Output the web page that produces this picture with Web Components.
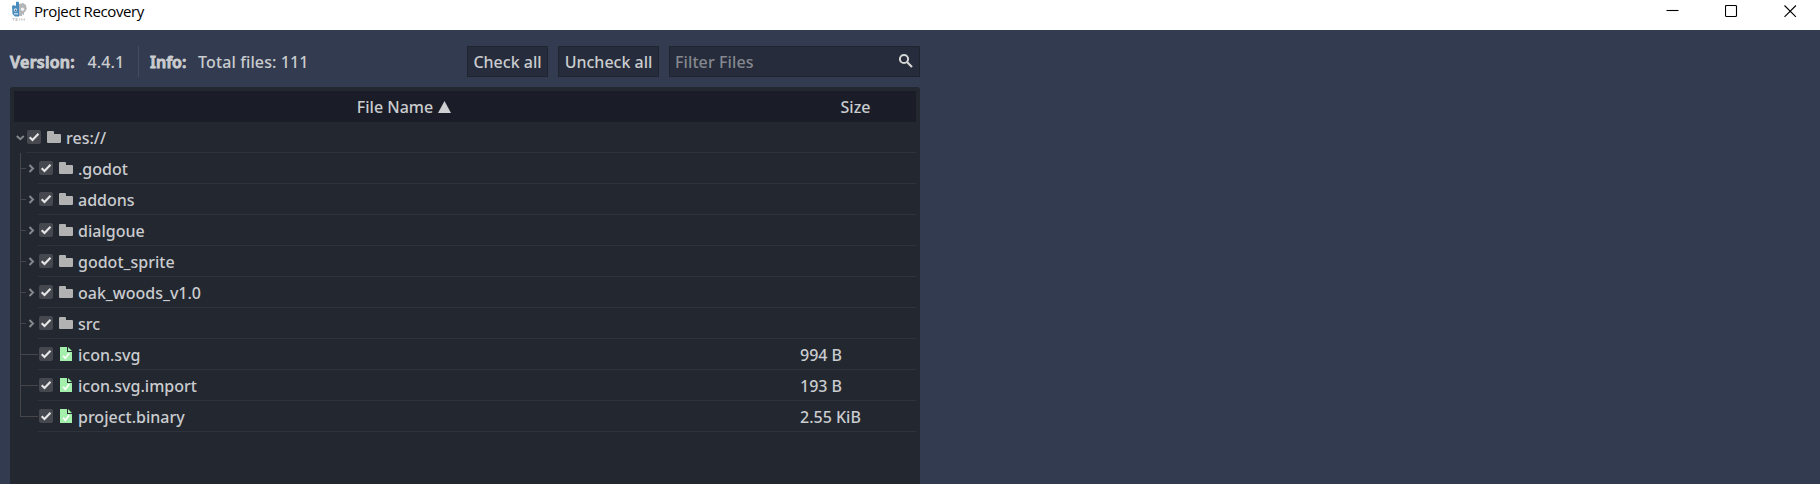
<!DOCTYPE html>
<html lang="en">
<head>
<meta charset="utf-8">
<title>Project Recovery</title>
<style>
html,body{margin:0;height:100%;overflow:hidden;background:#333b50}
body{font-family:"Noto Sans","Open Sans",sans-serif;font-size:16px;font-weight:500;color:#cacccf}
</style>
</head>
<body>
<recovery-window></recovery-window>
<script>
const define = (name, html) => customElements.define(name, class extends HTMLElement {
  constructor() {
    super();
    this.attachShadow({ mode: "open" });
  }
  connectedCallback() {
    this.shadowRoot.innerHTML = typeof html === "function" ? html(this) : html;
  }
});

define("title-bar", `
<style>
:host{display:flex;height:30px;background:#fff;color:#000;box-sizing:border-box;padding-left:11px}
.logo{width:16px;height:20px;margin-top:1px}
.name{font:400 15px/22px "Open Sans","Noto Sans",sans-serif;margin-left:7px;flex:1;white-space:nowrap;letter-spacing:-.4px}
.controls{display:flex;gap:46px;padding:5px 23px 0 0}
.controls svg{width:13px;height:13px;fill:none;stroke:#000;stroke-width:1.1}
</style>
<svg class="logo" viewBox="0 0 16 20">
  <path d="M1 5l2-1 1 1 1-.5V1l2-.5 1 1v14H4L1.500 13z" fill="#478cbf"/>
  <path d="M8 3l4-1 3 2 .8 4-1.800 3-1 .5V14h-1v-1h-1v2H8z" fill="#b4b6ba"/>
  <circle cx="4.500" cy="9" r="1.700" fill="#d8e7f1"/><circle cx="4.700" cy="9.200" r=".8" fill="#414f5b"/>
  <circle cx="11.500" cy="8.200" r="1.700" fill="#f1f1f1"/>
  <path d="M3 12h4v1.500H3z" fill="#b9d5e8"/>
  <path d="M1.500 17.500h2m-1 0v2m2-2h2m-2 1h2m-2 1h2m2-2v2m2-2v2m1.500-2v2m1.500-2v2" stroke="#c9c9c9" fill="none"/>
</svg>
<span class="name">Project Recovery</span>
<div class="controls">
  <svg viewBox="0 0 13 13"><path d="M.5 5.500h12"/></svg>
  <svg viewBox="0 0 13 13"><rect x=".5" y=".5" width="11" height="11" rx="1"/></svg>
  <svg viewBox="0 0 13 13"><path d="M.5.500l11.400 11.400M11.900.500L.5 11.900"/></svg>
</div>`);

define("tool-button", `
<style>
:host{display:block;box-sizing:border-box;height:31px;border:1px solid #1f252f;background:#262c3b;text-align:center;line-height:31px;white-space:nowrap}
</style><slot></slot>`);

define("filter-field", `
<style>
:host{display:flex;box-sizing:border-box;height:31px;width:251px;border:1px solid #1f252f;background:#262c3b;color:#85888f;line-height:31px;padding:0 5px 0 5px;justify-content:space-between;letter-spacing:.1px}
svg{width:16px;height:16px;margin-top:6px;fill:none;stroke:#d5d6d6}
</style><slot></slot>
<svg viewBox="0 0 16 16"><circle cx="6" cy="6" r="4.100" stroke-width="2"/><path d="M9 9l5 5" stroke-width="2.200"/></svg>`);

define("tool-bar", `
<style>
:host{display:flex;height:31px;width:910px;line-height:32px;white-space:nowrap}
b{font-weight:600;-webkit-text-stroke:.9px currentColor}
.ver{width:77.500px;letter-spacing:.25px}.num{width:50.500px;letter-spacing:.15px}.info{width:48px;margin-left:11px}
.sep{width:1px;background:#464c5e}
.total{flex:1;letter-spacing:.12px}
.check{width:81px;margin-right:10px}.uncheck{width:101px;margin-right:10px}
</style>
<b class="ver">Version:</b><span class="num">4.4.1</span><span class="sep"></span>
<b class="info">Info:</b><span class="total">Total files: 111</span>
<tool-button class="check">Check all</tool-button>
<tool-button class="uncheck">Uncheck all</tool-button>
<filter-field>Filter Files</filter-field>`);

define("tree-header", `
<style>
:host{display:grid;grid-template-columns:780px 122px;height:31px;background:#1a1d27;line-height:32px;text-align:center}
.file{display:flex;justify-content:center;align-items:center;gap:5px}
.size{padding-left:1px}
svg{width:13px;height:12px;margin-top:0}
</style>
<span class="file"><span>File Name</span><svg viewBox="0 0 13 12"><path d="M6.500 0L13 12H0z" fill="#cdcfd2"/></svg></span><span class="size">Size</span>`);

const checkbox = `<svg class="box" viewBox="0 0 14 14"><rect width="14" height="14" rx="2" fill="#45484f"/><path d="M2.700 7.200l2.800 2.700 6-6.200" fill="none" stroke="#e6e6e6" stroke-width="2.100"/></svg>`;
const folder = `<svg class="icon" viewBox="0 0 14 14"><path d="M0 2q0-1 1-1h5q1 0 1 1v2h6q1 0 1 1v7q0 1-1 1H1q-1 0-1-1z" fill="#b2b2b2"/></svg>`;
const file = `<svg class="icon" viewBox="0 0 14 14"><path d="M1 0h7v5h5v9H1zM9 0l4 4H9z" fill="#a5efac"/><path d="M4.100 8.700l2.200 2.500 3.900-5" fill="none" stroke="#fff" stroke-width="1.700"/></svg>`;

define("tree-row", el => {
  const kind = el.getAttribute("kind");
  const root = kind === "root";
  const last = el.hasAttribute("last");
  const guide = root
    ? `<path d="M2.800 14l3.500 3.200L9.800 14" class="arrow"/>`
    : `<path d="M6.500 0V${last ? 16 : 31}M7 15.500h${kind === "file" ? 17 : 5}" class="line"/>` +
      (kind === "folder" ? `<path d="M15.500 12l3.500 3.500-3.500 3.500" class="arrow"/>` : "");
  const w = root ? 12 : 24;
  return `
<style>
:host{display:flex;height:31px}
.guide{width:${w}px;height:31px;flex:none}
.line{stroke:#46464a;fill:none}
.arrow{stroke:#85888c;stroke-width:2;fill:none}
.body{flex:1;display:flex;box-sizing:border-box;border-bottom:1px solid #2f333b;padding-left:1px}
.box,.icon{width:14px;height:14px;margin-top:8px;flex:none}
.icon{margin:8px 5px 0 6px}
.name{line-height:33px;height:30px;width:${root ? 734 : 722}px;white-space:pre}
.size{line-height:33px;height:30px;white-space:pre}
</style>
<svg class="guide" viewBox="0 0 ${w} 31">${guide}</svg>
<div class="body">${checkbox}${kind === "file" ? file : folder}<span class="name"><slot></slot></span><span class="size">${el.getAttribute("size") || ""}</span></div>`;
});

define("file-tree", `
<style>
:host{display:block;box-sizing:border-box;width:910px;flex:1;background:#23272f;border-radius:3px 3px 0 0;padding:4px}
</style>
<tree-header></tree-header>
<tree-row kind="root">res://</tree-row>
<tree-row kind="folder">.godot</tree-row>
<tree-row kind="folder">addons</tree-row>
<tree-row kind="folder">dialgoue</tree-row>
<tree-row kind="folder">godot_sprite</tree-row>
<tree-row kind="folder">oak_woods_v1.0</tree-row>
<tree-row kind="folder">src</tree-row>
<tree-row kind="file" size="994 B">icon.svg</tree-row>
<tree-row kind="file" size="193 B">icon.svg.import</tree-row>
<tree-row kind="file" size="2.55 KiB" last>project.binary</tree-row>`);

define("recovery-window", `
<style>
:host{display:flex;flex-direction:column;height:484px}
main{flex:1;display:flex;flex-direction:column;gap:10px;padding:16px 10px 0}
</style>
<title-bar></title-bar>
<main><tool-bar></tool-bar><file-tree></file-tree></main>`);
</script>
</body>
</html>
